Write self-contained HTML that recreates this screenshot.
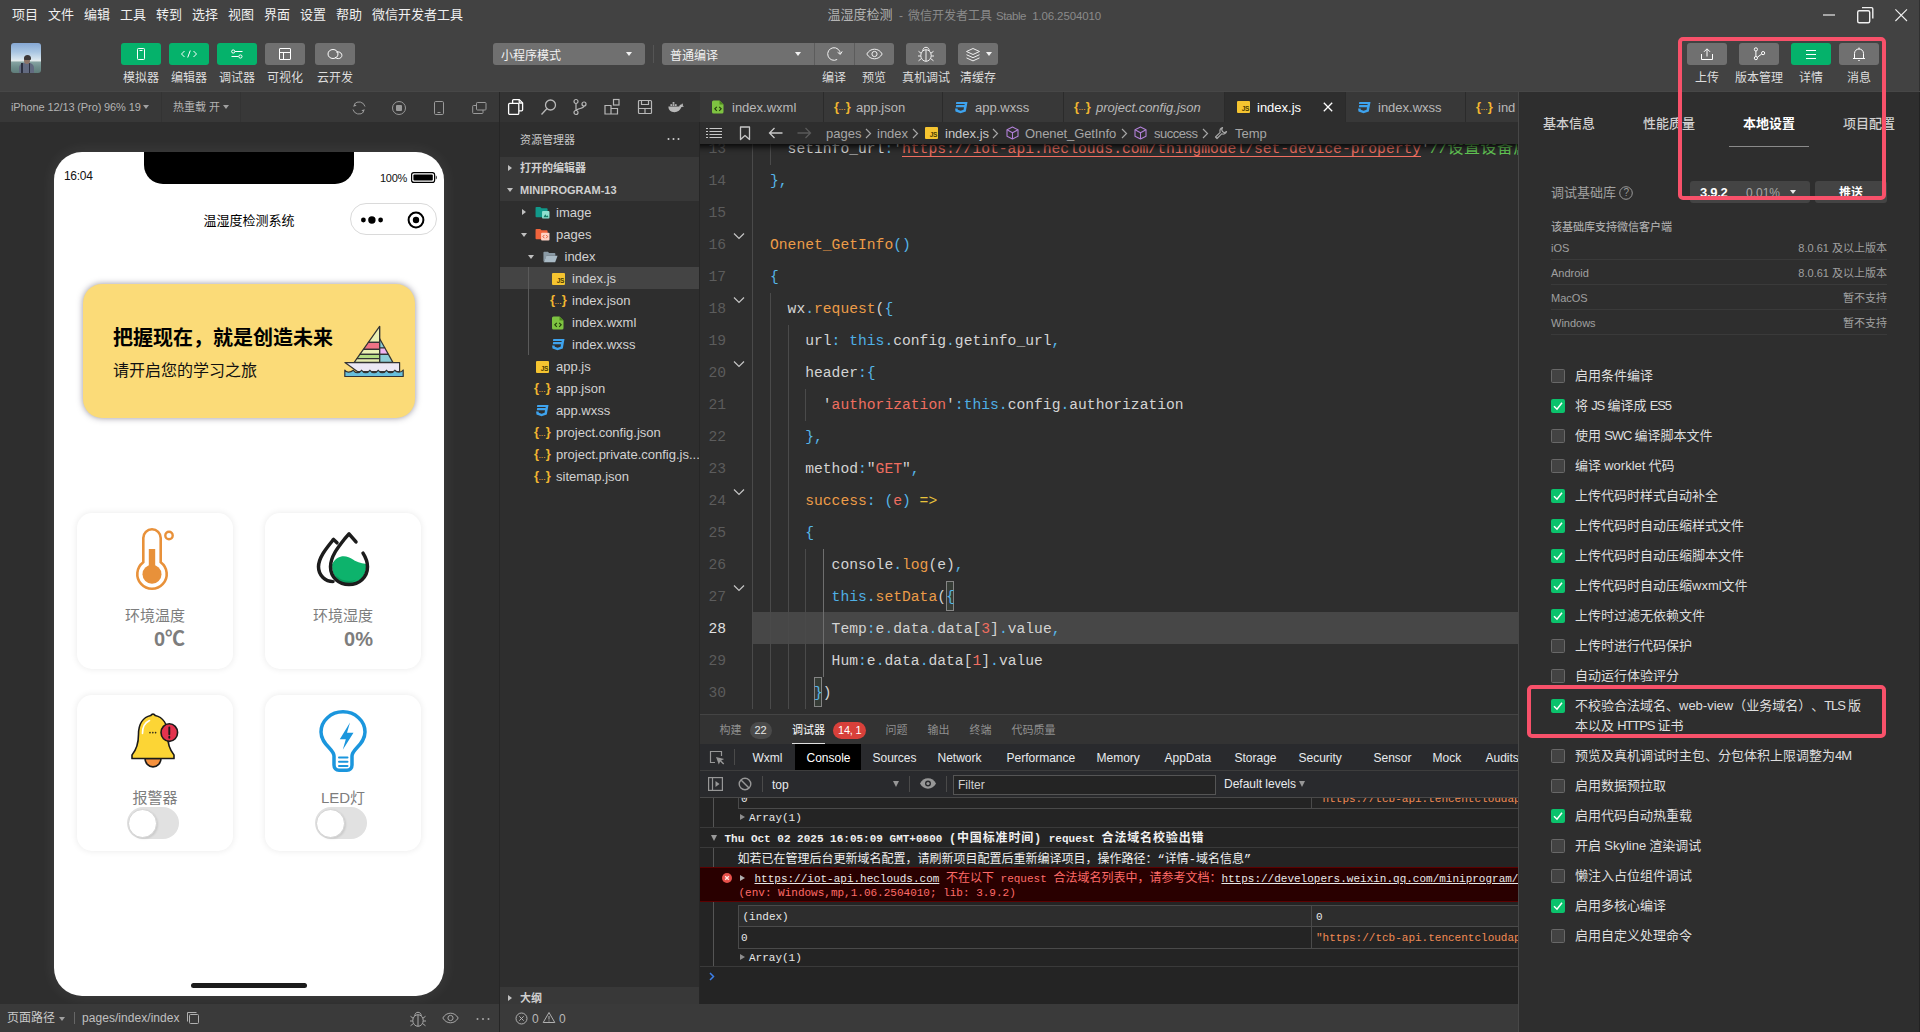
<!DOCTYPE html><html lang="zh"><head><meta charset="utf-8"><title>温湿度检测 - 微信开发者工具</title><style>
*{box-sizing:border-box;margin:0;padding:0}
html,body{width:1920px;height:1032px;overflow:hidden;background:#2e2e2e}
body{position:relative;text-spacing-trim:space-all;font-family:"Liberation Sans","Noto Sans CJK SC",sans-serif;font-size:12px;color:#ccc;-webkit-font-smoothing:antialiased}
.a{position:absolute}
.t{position:absolute;white-space:pre;line-height:20px;height:20px}
svg{position:absolute;overflow:visible}
.btn{position:absolute;top:43px;width:40px;height:22px;border-radius:3px;background:#707070}
.btn.g{background:#05b26b}
.lbl{position:absolute;top:68px;height:20px;line-height:20px;font-size:12px;color:#dedede;text-align:center;white-space:pre;transform:translateX(-50%)}
.mono{font-family:"Liberation Mono","Noto Sans CJK SC",monospace}
</style></head><body><div class="a" style="left:0px;top:0px;width:1920px;height:92px;background:#424242;"></div><div class="t" style="left:12px;top:5px;font-size:13px;color:#f0f0f0;">项目</div><div class="t" style="left:48px;top:5px;font-size:13px;color:#f0f0f0;">文件</div><div class="t" style="left:84px;top:5px;font-size:13px;color:#f0f0f0;">编辑</div><div class="t" style="left:120px;top:5px;font-size:13px;color:#f0f0f0;">工具</div><div class="t" style="left:156px;top:5px;font-size:13px;color:#f0f0f0;">转到</div><div class="t" style="left:192px;top:5px;font-size:13px;color:#f0f0f0;">选择</div><div class="t" style="left:228px;top:5px;font-size:13px;color:#f0f0f0;">视图</div><div class="t" style="left:264px;top:5px;font-size:13px;color:#f0f0f0;">界面</div><div class="t" style="left:300px;top:5px;font-size:13px;color:#f0f0f0;">设置</div><div class="t" style="left:336px;top:5px;font-size:13px;color:#f0f0f0;">帮助</div><div class="t" style="left:372px;top:5px;font-size:13px;color:#f0f0f0;">微信开发者工具</div><div class="t" style="left:827.5px;top:5px;font-size:13px;color:#b4b4b4;">温湿度检测</div><div class="t" style="left:899px;top:5.5px;font-size:12px;color:#8a8a8a;">-</div><div class="t" style="left:908px;top:5.5px;font-size:12px;color:#8a8a8a;">微信开发者工具</div><div class="t" style="left:996px;top:5.5px;font-size:11.5px;color:#8a8a8a;letter-spacing:-0.43px">Stable</div><div class="t" style="left:1032.2px;top:5.5px;font-size:11.5px;color:#8a8a8a;letter-spacing:-0.13px">1.06.2504010</div><svg style="left:1820px;top:5px" width="92" height="20" viewBox="0 0 92 20" fill="none" stroke="#f0f0f0" stroke-width="1.400"><path d="M3 10H15" stroke="#a6a6a6" stroke-width="2"/><rect x="37.700" y="5.700" width="12" height="12" rx="1.500"/><path d="M42 2.600H51.500a1.300 1.300 0 0 1 1.300 1.300V13.500"/><path d="M75.400 4.300L87 16M87 4.300L75.400 16" stroke-width="1.100"/></svg><div class="a" style="left:1919px;top:0px;width:1px;height:92px;background:#303030;"></div><div class="a" style="left:0px;top:91px;width:1920px;height:1px;background:#474747;"></div><div class="a" style="left:11px;top:43px;width:30px;height:30px;border-radius:3px;overflow:hidden;background:linear-gradient(180deg,#86a8d4 0%,#a9c6e2 30%,#d9e6ee 55%,#e6ecea 60%,#86a3a2 63%,#6f8e8c 80%,#5f7d7a 100%)"><div class="a" style="left:8px;top:19.500px;width:14.500px;height:13px;border-radius:5px 5px 0 0;background:#626a80"></div><div class="a" style="left:10px;top:20px;width:1.500px;height:10px;background:#2c3040"></div><div class="a" style="left:17.500px;top:20px;width:1.500px;height:10px;background:#2c3040"></div><div class="a" style="left:13px;top:13px;width:6px;height:8px;border-radius:3px;background:#8c7468"></div><div class="a" style="left:12.500px;top:12px;width:7px;height:5px;border-radius:3.500px 3.500px 1px 1px;background:#3c3838"></div></div><div class="btn g" style="left:121px"><svg style="left:15px;top:5px" width="10" height="12" viewBox="0 0 10 12" fill="none" stroke="#fff" stroke-width="1"><rect x="1.5" y="0.5" width="7" height="11" rx="0.8"/><path d="M3.5 2.5H6.5"/></svg></div><div class="lbl" style="left:141px">模拟器</div><div class="btn g" style="left:169px"><svg style="left:11px;top:5px" width="18" height="12" viewBox="0 0 18 12" fill="none" stroke="#fff" stroke-width="1"><path d="M4.5 3L1.5 6L4.5 9M13.5 3L16.5 6L13.5 9M10.3 2.5L7.7 9.5"/></svg></div><div class="lbl" style="left:189px">编辑器</div><div class="btn g" style="left:217px"><svg style="left:13px;top:5px" width="14" height="12" viewBox="0 0 14 12" fill="none" stroke="#fff" stroke-width="1"><path d="M5 3.5H12.5M1.5 8.5H8.5"/><circle cx="3.2" cy="3.5" r="1.6"/><circle cx="10.4" cy="8.5" r="1.6"/></svg></div><div class="lbl" style="left:237px">调试器</div><div class="btn" style="left:265px"><svg style="left:13px;top:4px" width="14" height="14" viewBox="0 0 14 14" fill="none" stroke="#fff" stroke-width="1"><rect x="1.5" y="1.5" width="11" height="11" rx="0.5"/><path d="M1.5 5.5H12.5M5.5 5.5V12.5"/></svg></div><div class="lbl" style="left:285px">可视化</div><div class="btn" style="left:315px"><svg style="left:12px;top:5px" width="16" height="12" viewBox="0 0 16 12" fill="none" stroke="#fff" stroke-width="1"><path d="M6 10.5C3.2 10.5 1 8.6 1 6S3.2 1.5 6 1.5 11 3.4 11 6 8.8 10.5 6 10.5z"/><path d="M9.3 4.2C10 3.9 10.7 3.8 11.4 3.9 13.4 4.1 14.9 5.6 14.9 7.4c0 1.8-1.6 3.2-3.6 3.2-1.2 0-2.5-.5-3.3-1.3"/></svg></div><div class="lbl" style="left:335px">云开发</div><div class="a" style="left:493px;top:43px;width:152px;height:22px;background:#707070;border-radius:3px"></div><div class="t" style="left:501px;top:46px;font-size:12px;color:#f2f2f2;">小程序模式</div><div class="a" style="left:626px;top:52px;border:3px solid transparent;border-top:4px solid #f2f2f2;border-bottom:0"></div><div class="a" style="left:653px;top:45px;width:1px;height:18px;background:#555;"></div><div class="a" style="left:662px;top:43px;width:232px;height:22px;background:#707070;border-radius:3px"></div><div class="t" style="left:670px;top:46px;font-size:12px;color:#f2f2f2;">普通编译</div><div class="a" style="left:795px;top:52px;border:3px solid transparent;border-top:4px solid #f2f2f2;border-bottom:0"></div><div class="a" style="left:814px;top:43px;width:1px;height:22px;background:#5c5c5c;"></div><div class="a" style="left:854px;top:43px;width:1px;height:22px;background:#5c5c5c;"></div><svg style="left:825.500px;top:46.200px" width="17" height="16" viewBox="0 0 17 16" fill="none" stroke="#f0f0f0" stroke-width="1"><path d="M14.300 8A6.300 6.300 0 1 0 11.150 13.460"/><path d="M11.600 6.300L14.300 8.400L16.200 5.400" stroke-linejoin="round"/></svg><svg style="left:866px;top:48px" width="17" height="12" viewBox="0 0 17 12" fill="none" stroke="#f0f0f0" stroke-width="1"><path d="M0.8 6C2.6 2.9 5.3 1.2 8.5 1.2S14.4 2.9 16.2 6C14.4 9.100 11.7 10.8 8.5 10.8S2.600 9.100 0.8 6z"/><circle cx="8.5" cy="6" r="2.6"/></svg><div class="lbl" style="left:834px">编译</div><div class="lbl" style="left:874px">预览</div><div class="a" style="left:906px;top:43px;width:40px;height:22px;background:#707070;border-radius:3px"></div><svg style="left:917px;top:45px" width="18" height="18" viewBox="0 0 18 18" fill="none" stroke="#f0f0f0" stroke-width="1"><ellipse cx="9" cy="10.500" rx="5.200" ry="5.800"/><path d="M9 4.800V16.200M5.800 6C5.800 3.500 7.200 2.300 9 2.300S12.200 3.500 12.200 6M4.200 8.300L1.500 6.300M3.800 11H1M4.200 13.700L1.500 15.800M13.800 8.300L16.500 6.300M14.200 11H17M13.800 13.700L16.500 15.800"/></svg><div class="lbl" style="left:926px">真机调试</div><div class="a" style="left:958px;top:43px;width:40px;height:22px;background:#707070;border-radius:3px"></div><svg style="left:965px;top:47px" width="17" height="16" viewBox="0 0 17 16" fill="none" stroke="#f0f0f0" stroke-width="1" stroke-linejoin="round"><path d="M8 1.500L14.500 4.500L8 7.500L1.500 4.500z"/><path d="M1.500 7.700L8 10.700L14.500 7.700M1.500 10.900L8 13.900L14.500 10.900"/></svg><div class="a" style="left:986px;top:52px;border:3px solid transparent;border-top:4px solid #f2f2f2;border-bottom:0"></div><div class="lbl" style="left:978px">清缓存</div><div class="btn" style="left:1687px"><svg style="left:13px;top:4px" width="14" height="14" viewBox="0 0 14 14" fill="none" stroke="#fff" stroke-width="1" stroke-linejoin="round"><path d="M1.500 7V12.500H12.500V7"/><path d="M7 9.500V2M4 4.800L7 1.800L10 4.800"/></svg></div><div class="lbl" style="left:1707px">上传</div><div class="btn" style="left:1739px"><svg style="left:13px;top:4px" width="14" height="14" viewBox="0 0 14 14" fill="none" stroke="#fff" stroke-width="1"><circle cx="3.900" cy="2.400" r="1.600"/><circle cx="3.900" cy="11.100" r="1.600"/><circle cx="11.100" cy="6.100" r="1.600"/><path d="M3.900 4V9.500M5.300 10.300L9.700 7"/></svg></div><div class="lbl" style="left:1759px">版本管理</div><div class="btn g" style="left:1791px"><svg style="left:15px;top:5px" width="10" height="12" viewBox="0 0 10 12" fill="none" stroke="#fff" stroke-width="1"><path d="M0 2.500H10M0 6.500H10M0 10.500H10"/></svg></div><div class="lbl" style="left:1811px">详情</div><div class="btn" style="left:1839px"><svg style="left:13px;top:3px" width="14" height="16" viewBox="0 0 14 16" fill="none" stroke="#fff" stroke-width="1"><path d="M2.500 12.500V7.500C2.500 4.800 4.500 3 7 3S11.500 4.800 11.500 7.500V12.500M1 12.500H13M7 3V1.500M6.300 14.500H7.700"/></svg></div><div class="lbl" style="left:1859px">消息</div><div class="a" style="left:0px;top:92px;width:500px;height:30px;background:#383838;"></div><div class="a" style="left:0px;top:122px;width:500px;height:882px;background:#2e2e2e;"></div><div class="t" style="left:11px;top:97px;font-size:11px;color:#b4b4b4;letter-spacing:-0.12px">iPhone 12/13 (Pro) 96% 19</div><div class="a" style="left:143px;top:105px;border:3.5px solid transparent;border-top:4px solid #a0a0a0;border-bottom:0"></div><div class="a" style="left:161px;top:92px;width:1px;height:30px;background:#333;"></div><div class="t" style="left:173px;top:97px;font-size:11px;color:#b4b4b4;">热重载 开</div><div class="a" style="left:223px;top:105px;border:3.5px solid transparent;border-top:4px solid #a0a0a0;border-bottom:0"></div><div class="a" style="left:240px;top:92px;width:1px;height:30px;background:#333;"></div><svg style="left:351px;top:100px" width="16" height="16" viewBox="0 0 16 16" fill="none" stroke="#9a9a9a" stroke-width="1"><path d="M3.200 4.200A6.200 6.200 0 0 1 14 6.500M12.800 11.800A6.200 6.200 0 0 1 2 9.500"/><path d="M2.200 6.800L3.300 3.700L5.600 5.700z M13.800 9.200L12.700 12.300L10.400 10.300z" fill="#9a9a9a" stroke="none"/></svg><svg style="left:391px;top:100px" width="16" height="16" viewBox="0 0 16 16" fill="none" stroke="#9a9a9a" stroke-width="1"><circle cx="8" cy="8" r="6.500"/><rect x="5" y="5" width="6" height="6" rx="1" fill="#9a9a9a" stroke="none"/></svg><svg style="left:433px;top:100px" width="12" height="16" viewBox="0 0 12 16" fill="none" stroke="#9a9a9a" stroke-width="1"><rect x="1.500" y="1.500" width="9" height="13" rx="1.200"/><path d="M4.500 12.500H7.500"/></svg><svg style="left:471px;top:100px" width="16" height="14" viewBox="0 0 16 14" fill="none" stroke="#9a9a9a" stroke-width="1"><rect x="5.500" y="2.500" width="9.500" height="7.500" rx="0.800"/><path d="M5.500 5.500H2.500a.8.8 0 0 0-.8.800V12.700a.8.8 0 0 0 .8.800H11.200a.8.8 0 0 0 .8-.800V10"/></svg><div class="a" style="left:54px;top:152px;width:390px;height:844px;background:#fff;border-radius:28px;box-shadow:0 0 16px rgba(255,255,255,0.085);overflow:hidden;color:#000"><div class="a" style="left:90px;top:0;width:210px;height:32px;background:#000;border-radius:0 0 19px 19px"></div><div class="t" style="left:10px;top:14px;font-size:12px;color:#111;letter-spacing:-0.3px">16:04</div><div class="t" style="left:326px;top:16px;font-size:11px;color:#111;letter-spacing:-0.3px">100%</div><svg style="left:357px;top:20px" width="27" height="11" viewBox="0 0 27 11"><rect x="0.600" y="0.600" width="23" height="9.800" rx="2.200" fill="none" stroke="#000" stroke-width="1.200"/><rect x="2.400" y="2.400" width="19.400" height="6.200" rx="1" fill="#000"/><path d="M24.800 3.500c1.200.3 1.200 3.700 0 4z" fill="#000"/></svg><div class="t" style="left:0;width:390px;text-align:center;top:59px;font-size:13px;color:#000">温湿度检测系统</div><div class="a" style="left:296px;top:51px;width:87px;height:32px;border:1px solid #dadada;border-radius:16px;background:#fff"></div><svg style="left:306px;top:61.500px" width="24" height="12" viewBox="0 0 24 12" fill="#000"><circle cx="3.400" cy="6" r="2.400"/><circle cx="11.900" cy="6" r="3.700"/><circle cx="20.600" cy="6" r="2.400"/></svg><svg style="left:352.600px;top:58.500px" width="18" height="18" viewBox="0 0 18 18"><circle cx="9" cy="9" r="7.400" fill="none" stroke="#000" stroke-width="2"/><circle cx="9" cy="9" r="3.200" fill="#000"/></svg><div class="a" style="left:29px;top:132px;width:332px;height:134px;border-radius:19px;background:#fbdb78;box-shadow:0 0 6.500px rgba(45,40,65,0.50)"></div><div class="t" style="left:59px;top:171px;height:30px;line-height:30px;font-size:20px;font-weight:bold;color:#000">把握现在，就是创造未来</div><div class="t" style="left:59px;top:207px;height:24px;line-height:24px;font-size:16px;color:#111">请开启您的学习之旅</div><svg style="left:290px;top:173px" width="60" height="52" viewBox="0 0 60 52" stroke="#333" stroke-width="1.200" stroke-linejoin="round">
<path d="M35.6 1.300L24.34 17.300H35.6z" fill="#eaf0b4"/>
<path d="M24.34 17.300L19.42 24.300H35.6V17.300z" fill="#ee7385"/>
<path d="M19.42 24.300L15.83 29.400H35.6V24.300z" fill="#eaf0b4"/>
<path d="M15.83 29.400L12.87 33.600H35.6V29.400z" fill="#b4dc82"/>
<path d="M12.87 33.600L10.2 37.400H35.6V33.600z" fill="#e6ecb0"/>
<path d="M35.6 13.500L40.89 23H35.6z" fill="#8ccdd6"/>
<path d="M35.6 23H40.89L44.45 29.400H35.6z" fill="#efb4f0"/>
<path d="M35.6 29.400H44.45L48.9 37.400H35.6z" fill="#8ccdd6"/>
<path d="M35.6 1.300V37.400" fill="none"/>
<path d="M0.900 37.600H55.600V46.500H13.400z" fill="#ece8f4"/>
<path d="M0.800 45c1.300 2.400 5.200 3 8.500 0.200 1.800 3.200 6.500 3.200 8.300 0 1.800 3.200 6.500 3.200 8.300 0 1.800 3.200 6.500 3.200 8.300 0 1.800 3.200 6.500 3.200 8.300 0 1.800 3.200 6.500 3.200 8.300 0 2 2.800 6.500 2.600 8.400-0.200V51.500H0.800z" fill="#68bedb"/>
</svg><div class="a" style="left:23px;top:361px;width:156px;height:156px;border-radius:15px;background:#fff;box-shadow:0 0 7px rgba(0,0,0,0.09)"></div><div class="a" style="left:211px;top:361px;width:156px;height:156px;border-radius:15px;background:#fff;box-shadow:0 0 7px rgba(0,0,0,0.09)"></div><div class="a" style="left:23px;top:543px;width:156px;height:156px;border-radius:15px;background:#fff;box-shadow:0 0 7px rgba(0,0,0,0.09)"></div><div class="a" style="left:211px;top:543px;width:156px;height:156px;border-radius:15px;background:#fff;box-shadow:0 0 7px rgba(0,0,0,0.09)"></div><svg style="left:81px;top:375px" width="42" height="64" viewBox="0 0 42 64" fill="none" stroke="#e8913a" stroke-width="2.600">
<path d="M8.300 35.200V11a8.700 8.700 0 0 1 17.400 0V35.200a14.700 14.700 0 1 1-17.400 0z"/>
<circle cx="17" cy="47.300" r="9.500" fill="#e8913a" stroke="none"/>
<rect x="13.800" y="22" width="6.400" height="20" fill="#e8913a" stroke="none"/>
<circle cx="34" cy="8.500" r="3.700" stroke-width="2.400"/>
</svg><svg style="left:262px;top:380px" width="54" height="55" preserveAspectRatio="none" viewBox="0 0 54 56" fill="none" stroke="#1c1c1c" stroke-width="3.500" stroke-linecap="round" stroke-linejoin="round">
<path d="M16 33C22 22 31 24 37 28C42 31.500 47 32 50.500 32.500C50.500 35 50.500 36 50 38C48.500 46.500 42 52.500 33 52.500C23 52.500 15.500 45 16 33z" fill="#0db36c" stroke="none"/>
<path d="M20 44C24 49 32 51.500 40 48.500C36 52 30 53 25 51C22 49.500 20.500 47 20 44z" fill="#0a9a5c" stroke="none"/>
<path d="M21 11L17.500 7.500C10 17 2.500 26 2.500 35.500 2.500 44.500 9.500 50.500 17 50.500"/>
<path d="M40 10L33 1.800 29 6.500C22 15.500 14.500 25 14.500 35.500 14.500 46.500 23 53.500 33 53.500S51.500 46.500 51.500 35.500C51.500 30.500 49.500 25.500 47 21.500"/>
</svg><div class="t" style="left:23px;width:156px;text-align:center;top:452px;height:24px;line-height:24px;font-size:15px;color:#7d7d7d">环境温度</div><div class="t" style="left:23px;width:108px;text-align:right;top:472px;height:30px;line-height:30px;font-size:20px;font-weight:bold;color:#7d7d7d">0℃</div><div class="t" style="left:211px;width:156px;text-align:center;top:452px;height:24px;line-height:24px;font-size:15px;color:#7d7d7d">环境湿度</div><div class="t" style="left:211px;width:108px;text-align:right;top:472px;height:30px;line-height:30px;font-size:20px;font-weight:bold;color:#7d7d7d">0%</div><svg style="left:76px;top:558.300px" width="50" height="61.400" preserveAspectRatio="none" viewBox="0 0 50 58" stroke="#1a1a1a" stroke-width="1.600" stroke-linejoin="round">
<path d="M15 45.800a8 8 0 0 0 16 0z" fill="#f5913e"/>
<path d="M20.800 5.200a2.600 2.600 0 0 1 4.400 0C33 6.800 37.500 13.500 37.500 23c0 8 1.500 14 6.500 19.500v3.300H2v-3.300C7 37 8.500 31 8.500 23 8.500 13.500 13 6.800 20.800 5.200z" fill="#fcd535"/>
<path d="M12.500 22c0-6 2.500-10 7-12" fill="none" stroke="#fff" stroke-width="1.600" stroke-linecap="round"/>
<circle cx="20" cy="21.300" r="0.300" fill="#1a1a1a" stroke-width="1"/><circle cx="22.800" cy="21.300" r="0.300" fill="#1a1a1a" stroke-width="1"/><circle cx="25.600" cy="21.300" r="0.300" fill="#1a1a1a" stroke-width="1"/>
<circle cx="39.300" cy="21.300" r="8.300" fill="#e3334e"/>
<path d="M39.300 16.500v6.300M39.300 25.300v0.800" stroke-width="1.900" stroke-linecap="round"/>
</svg><svg style="left:265px;top:558px" width="48" height="62" viewBox="0 0 48 62" fill="none" stroke="#1b96dd" stroke-width="3.500" stroke-linejoin="round" stroke-linecap="round">
<path d="M15 46c0-7-13-11.500-13-24a22 20.200 0 0 1 44 0c0 12.500-13 17-13 24v9c0 3-2 5.200-5 5.200h-8c-3 0-5-2.200-5-5.200z"/>
<path d="M20 47.500h8.500M20 51.700h8.500M20 55.900h8.500" stroke-width="2"/>
<path d="M31 12.500L20.800 29.300h6l-3 10.500 10.700-17h-6.500z" fill="#1b96dd" stroke="none"/>
</svg><div class="t" style="left:23px;width:156px;text-align:center;top:634px;height:24px;line-height:24px;font-size:15px;color:#7d7d7d">报警器</div><div class="t" style="left:211px;width:156px;text-align:center;top:634px;height:24px;line-height:24px;font-size:15px;color:#7d7d7d">LED灯</div><div class="a" style="left:73px;top:655px;width:52px;height:32px;border-radius:16px;background:#e1e1e1"><div class="a" style="left:1.200px;top:1.500px;width:29px;height:29px;border-radius:50%;background:#fff;border:1.200px solid #d3d3d3;box-shadow:1px 1px 2px rgba(0,0,0,0.10)"></div></div><div class="a" style="left:261px;top:655px;width:52px;height:32px;border-radius:16px;background:#e1e1e1"><div class="a" style="left:1.200px;top:1.500px;width:29px;height:29px;border-radius:50%;background:#fff;border:1.200px solid #d3d3d3;box-shadow:1px 1px 2px rgba(0,0,0,0.10)"></div></div><div class="a" style="left:137px;top:830.500px;width:116px;height:5px;border-radius:3px;background:#1c1c1c"></div></div><div class="a" style="left:0px;top:1004px;width:1920px;height:28px;background:#3a3a3a;"></div><div class="t" style="left:7px;top:1008px;font-size:12px;color:#c8c8c8;">页面路径</div><div class="a" style="left:59px;top:1017px;border:3.500px solid transparent;border-top:4px solid #a0a0a0;border-bottom:0"></div><div class="a" style="left:74px;top:1012px;width:1px;height:12px;background:#666;"></div><div class="t" style="left:82px;top:1008px;font-size:12px;color:#c0c0c0;letter-spacing:0.05px">pages/index/index</div><svg style="left:186px;top:1011px" width="14" height="14" viewBox="0 0 14 14" fill="none" stroke="#b0b0b0" stroke-width="1"><path d="M1.500 10.500V1.500H10.500"/><rect x="3.500" y="3.500" width="9" height="9" rx="1"/></svg><svg style="left:409px;top:1010px" width="18" height="18" viewBox="0 0 18 18" fill="none" stroke="#a8a8a8" stroke-width="1"><ellipse cx="9" cy="10.500" rx="5.200" ry="5.800"/><path d="M9 4.800V16.200M5.800 6C5.800 3.500 7.200 2.300 9 2.300S12.200 3.500 12.200 6M4.200 8.300L1.500 6.300M3.800 11H1M4.200 13.700L1.500 15.800M13.800 8.300L16.500 6.300M14.200 11H17M13.800 13.700L16.500 15.800"/></svg><svg style="left:442px;top:1012px" width="17" height="12" viewBox="0 0 17 12" fill="none" stroke="#a8a8a8" stroke-width="1"><path d="M0.800 6C2.600 2.900 5.300 1.200 8.500 1.200S14.400 2.900 16.200 6C14.400 9.100 11.700 10.800 8.500 10.800S2.600 9.100 0.800 6z"/><circle cx="8.500" cy="6" r="2.600"/></svg><svg style="left:476px;top:1017px" width="14" height="4" viewBox="0 0 14 4" fill="#a8a8a8"><circle cx="1.500" cy="2" r="1"/><circle cx="7" cy="2" r="1"/><circle cx="12.500" cy="2" r="1"/></svg><div class="a" style="left:499px;top:92px;width:1px;height:940px;background:#262626;"></div><div class="a" style="left:500px;top:92px;width:200px;height:30px;background:#333333;"></div><div class="a" style="left:500px;top:122px;width:199px;height:882px;background:#2e2e2e;"></div><svg style="left:507px;top:98px" width="18" height="18" viewBox="0 0 18 18" fill="none" stroke="#fff" stroke-width="1.300" stroke-linejoin="round"><path d="M5.600 5.200V2.600a1 1 0 0 1 1-1H12.300L15.600 4.900V11.800a1 1 0 0 1-1 1H12"/><path d="M12.200 1.800V5H15.400"/><rect x="1.600" y="5.400" width="10.200" height="11" rx="1.200"/></svg><svg style="left:540px;top:98px" width="18" height="18" viewBox="0 0 18 18" fill="none" stroke="#b8b8b8" stroke-width="1.300"><circle cx="10.500" cy="7" r="5"/><path d="M7 10.500L1.500 16.500"/></svg><svg style="left:571px;top:98px" width="18" height="18" viewBox="0 0 18 18" fill="none" stroke="#b8b8b8" stroke-width="1.200"><circle cx="5" cy="3.500" r="2"/><circle cx="5" cy="14.500" r="2"/><circle cx="13" cy="6" r="2"/><path d="M5 5.500V12.500M13 8c0 3-7.500 2-8 5"/></svg><svg style="left:603px;top:98px" width="18" height="18" viewBox="0 0 18 18" fill="none" stroke="#b8b8b8" stroke-width="1.200"><path d="M2 7.500H8V16H2zM8 10.500H14.500V16H8M8 10.500V7.500"/><rect x="10.500" y="1.500" width="5.500" height="5.500"/></svg><svg style="left:637px;top:99px" width="16" height="16" viewBox="0 0 16 16" fill="none" stroke="#b8b8b8" stroke-width="1.200"><rect x="1.500" y="1.500" width="13" height="13" rx="1"/><path d="M4.500 1.500V5.500H11.500V1.500M1.500 9.500H8V14.500M8 9.500H14.500"/></svg><svg style="left:668px;top:101px" width="16" height="12" viewBox="0 0 20 14" fill="#b8b8b8"><path d="M0.500 6.500H14c.5-2 1.500-3 3-2.500C17 3 17.500 2.500 18 2.500c.8 1 .8 2 .5 2.800.8.200 1.200.500 1.500.900-1 .800-2 1-3.200.900C15.500 11 12.500 13.500 8 13.500 3.500 13.500.500 11 .500 6.500z"/><rect x="3" y="3.500" width="2.200" height="2.200"/><rect x="5.800" y="3.500" width="2.200" height="2.200"/><rect x="8.600" y="3.500" width="2.200" height="2.200"/><rect x="5.800" y="0.800" width="2.200" height="2.200"/></svg><div class="t" style="left:520px;top:129.5px;font-size:11px;color:#c8c8c8;">资源管理器</div><svg style="left:667px;top:137px" width="14" height="4" viewBox="0 0 14 4" fill="#d0d0d0"><circle cx="1.500" cy="2" r="1"/><circle cx="6.500" cy="2" r="1"/><circle cx="11.500" cy="2" r="1"/></svg><div class="a" style="left:500px;top:157px;width:199px;height:44px;background:#383838;"></div><div class="a" style="left:508px;top:164.5px;border:3.500px solid transparent;border-left:4.500px solid #c0c0c0;border-right:0"></div><div class="t" style="left:520px;top:158px;font-size:11px;color:#d0d0d0;font-weight:bold">打开的编辑器</div><div class="a" style="left:506.5px;top:188px;border:3.500px solid transparent;border-top:4.500px solid #c0c0c0;border-bottom:0"></div><div class="t" style="left:520px;top:180px;font-size:11px;color:#d0d0d0;font-weight:bold">MINIPROGRAM-13</div><div class="a" style="left:500px;top:267px;width:199px;height:22px;background:#444444;"></div><div class="a" style="left:528px;top:267px;width:1px;height:88px;background:#5a5a5a;"></div><div class="a" style="left:522px;top:209.0px;border:3.500px solid transparent;border-left:4.500px solid #c0c0c0;border-right:0"></div><svg style="left:535px;top:206.0px" width="15" height="13" viewBox="0 0 16 14"><path d="M0.500 2A1 1 0 0 1 1.500 1H5.500L7 2.500H12.500A1 1 0 0 1 13.500 3.500V11A1 1 0 0 1 12.500 12H1.500A1 1 0 0 1 .500 11z" fill="#11998a"/><rect x="7.500" y="5.500" width="8" height="8" rx="1" fill="#8fe0cf"/><path d="M9 12l2-3 1.500 2 1-1 1 2z" fill="#127a63"/></svg><div class="t" style="left:556px;top:202.5px;font-size:13px;color:#d2d2d2;">image</div><div class="a" style="left:520.5px;top:232.5px;border:3.500px solid transparent;border-top:4.500px solid #c0c0c0;border-bottom:0"></div><svg style="left:535px;top:228.0px" width="15" height="13" viewBox="0 0 16 14"><path d="M0.500 2A1 1 0 0 1 1.500 1H5.500L7 2.500H12.500A1 1 0 0 1 13.500 3.500V11A1 1 0 0 1 12.500 12H1.500A1 1 0 0 1 .500 11z" fill="#f0643c"/><rect x="6.500" y="5" width="9" height="8.500" rx="1" fill="#ffd2c4"/><path d="M10 7.500L8.500 9.200 10 11M12 7.500l1.500 1.700L12 11" fill="none" stroke="#e0522c" stroke-width="1"/></svg><div class="t" style="left:556px;top:224.5px;font-size:13px;color:#d2d2d2;">pages</div><div class="a" style="left:527.5px;top:254.5px;border:3.500px solid transparent;border-top:4.500px solid #c0c0c0;border-bottom:0"></div><svg style="left:543px;top:250.5px" width="15" height="12" viewBox="0 0 17 13"><path d="M0.500 1.500A1 1 0 0 1 1.500 .500H5.500L7 2H13A1 1 0 0 1 14 3V5H4L1.500 11.500H.500z" fill="#8a9aa5"/><path d="M3.800 5H16.500L13.800 12.500H1z" fill="#a9bac5"/></svg><div class="t" style="left:564.5px;top:246.5px;font-size:13px;color:#d2d2d2;">index</div><div class="a" style="left:552px;top:272.5px;width:12.500px;height:12px;background:#f5c430;border-radius:1px"></div><div class="t" style="left:556.8px;top:274.5px;font-size:6.500px;font-weight:bold;color:#4a3c00;height:12px;line-height:12px;letter-spacing:-0.3px">JS</div><div class="t" style="left:572px;top:268.5px;font-size:13px;color:#d2d2d2;">index.js</div><div class="t" style="left:550px;top:290.0px;font-size:13px;font-weight:bold;color:#f2b731;letter-spacing:-0.6px">{<span style="font-size:9px;font-weight:normal;letter-spacing:-0.1px;position:relative;top:-0.500px">...</span>}</div><div class="t" style="left:572px;top:290.5px;font-size:13px;color:#d2d2d2;">index.json</div><svg style="left:552px;top:315.5px" width="12" height="14" viewBox="0 0 12 14"><path d="M1.500 0.500H7.500L11.500 4.500V12a1.500 1.500 0 0 1-1.500 1.500H1.500A1.500 1.500 0 0 1 0 12V2A1.500 1.500 0 0 1 1.500 0.500z" fill="#7ec341"/><path d="M7.500 0.500V4.500H11.500z" fill="#4e8a1e"/><path d="M4.800 6.800L2.800 8.800 4.800 10.800M7.200 6.800l2 2-2 2" fill="none" stroke="#203a08" stroke-width="1.100"/></svg><div class="t" style="left:572px;top:312.5px;font-size:13px;color:#d2d2d2;">index.wxml</div><svg style="left:550.5px;top:338.0px" width="14" height="13" preserveAspectRatio="none" viewBox="0 0 14 14" fill="#3ea3ee"><path d="M2.300 1H13.500L11.800 11.200 6.500 13.200 1.500 11.200 1.100 8.200H3.600L3.800 9.500 6.600 10.600 9.600 9.500 10 6.800H1.800L2.200 4.400H10.500L10.700 3.300H1.900z"/></svg><div class="t" style="left:572px;top:334.5px;font-size:13px;color:#d2d2d2;">index.wxss</div><div class="a" style="left:536px;top:360.5px;width:12.500px;height:12px;background:#f5c430;border-radius:1px"></div><div class="t" style="left:540.8px;top:362.5px;font-size:6.500px;font-weight:bold;color:#4a3c00;height:12px;line-height:12px;letter-spacing:-0.3px">JS</div><div class="t" style="left:556px;top:356.5px;font-size:13px;color:#d2d2d2;">app.js</div><div class="t" style="left:534px;top:378.0px;font-size:13px;font-weight:bold;color:#f2b731;letter-spacing:-0.6px">{<span style="font-size:9px;font-weight:normal;letter-spacing:-0.1px;position:relative;top:-0.500px">...</span>}</div><div class="t" style="left:556px;top:378.5px;font-size:13px;color:#d2d2d2;">app.json</div><svg style="left:534.5px;top:404.0px" width="14" height="13" preserveAspectRatio="none" viewBox="0 0 14 14" fill="#3ea3ee"><path d="M2.300 1H13.500L11.800 11.200 6.500 13.200 1.500 11.200 1.100 8.200H3.600L3.800 9.500 6.600 10.600 9.600 9.500 10 6.800H1.800L2.200 4.400H10.500L10.700 3.300H1.900z"/></svg><div class="t" style="left:556px;top:400.5px;font-size:13px;color:#d2d2d2;">app.wxss</div><div class="t" style="left:534px;top:422.0px;font-size:13px;font-weight:bold;color:#f2b731;letter-spacing:-0.6px">{<span style="font-size:9px;font-weight:normal;letter-spacing:-0.1px;position:relative;top:-0.500px">...</span>}</div><div class="t" style="left:556px;top:422.5px;font-size:13px;color:#d2d2d2;">project.config.json</div><div class="t" style="left:534px;top:444.0px;font-size:13px;font-weight:bold;color:#f2b731;letter-spacing:-0.6px">{<span style="font-size:9px;font-weight:normal;letter-spacing:-0.1px;position:relative;top:-0.500px">...</span>}</div><div class="t" style="left:556px;top:444.5px;font-size:13px;color:#d2d2d2;">project.private.config.js...</div><div class="t" style="left:534px;top:466.0px;font-size:13px;font-weight:bold;color:#f2b731;letter-spacing:-0.6px">{<span style="font-size:9px;font-weight:normal;letter-spacing:-0.1px;position:relative;top:-0.500px">...</span>}</div><div class="t" style="left:556px;top:466.5px;font-size:13px;color:#d2d2d2;">sitemap.json</div><div class="a" style="left:500px;top:987px;width:199px;height:17px;background:#383838;"></div><div class="a" style="left:508px;top:994.5px;border:3.500px solid transparent;border-left:4.500px solid #c0c0c0;border-right:0"></div><div class="t" style="left:520px;top:988px;font-size:11px;color:#d0d0d0;font-weight:bold">大纲</div><svg style="left:515px;top:1012px" width="13" height="13" viewBox="0 0 13 13" fill="none" stroke="#b0b0b0" stroke-width="1"><circle cx="6.500" cy="6.500" r="5.500"/><path d="M4.300 4.300l4.400 4.400M8.700 4.300L4.300 8.700"/></svg><div class="t" style="left:532px;top:1008.5px;font-size:12px;color:#b8b8b8;">0</div><svg style="left:542px;top:1011px" width="14" height="13" viewBox="0 0 14 13" fill="none" stroke="#b0b0b0" stroke-width="1" stroke-linejoin="round"><path d="M7 1.500L12.800 11.500H1.200z"/><path d="M7 5V8.500M7 9.500v1"/></svg><div class="t" style="left:559px;top:1008.5px;font-size:12px;color:#b8b8b8;">0</div><div class="a" style="left:699px;top:122px;width:1px;height:882px;background:#262626;"></div><div class="a" style="left:700px;top:92px;width:819px;height:30px;background:#383838;"></div><div class="a" style="left:700px;top:122px;width:819px;height:592px;background:#2e2e2e;"></div><div class="a" style="left:823px;top:92px;width:1px;height:30px;background:#2b2b2b;"></div><svg style="left:712px;top:100px" width="12" height="14" viewBox="0 0 12 14"><path d="M1.500 0.500H7.500L11.500 4.500V12a1.500 1.500 0 0 1-1.500 1.500H1.500A1.500 1.500 0 0 1 0 12V2A1.500 1.500 0 0 1 1.500 0.500z" fill="#7ec341"/><path d="M7.500 0.500V4.500H11.500z" fill="#4e8a1e"/><path d="M4.800 6.800L2.800 8.800 4.800 10.800M7.200 6.800l2 2-2 2" fill="none" stroke="#203a08" stroke-width="1.100"/></svg><div class="t" style="left:732px;top:98px;font-size:13px;color:#b9b9b9;">index.wxml</div><div class="a" style="left:942px;top:92px;width:1px;height:30px;background:#2b2b2b;"></div><div class="t" style="left:834px;top:96.5px;font-size:13px;font-weight:bold;color:#f2b731;letter-spacing:-0.6px">{<span style="font-size:9px;font-weight:normal;letter-spacing:-0.1px;position:relative;top:-0.500px">...</span>}</div><div class="t" style="left:856px;top:98px;font-size:13px;color:#b9b9b9;">app.json</div><div class="a" style="left:1063px;top:92px;width:1px;height:30px;background:#2b2b2b;"></div><svg style="left:953.5px;top:100.5px" width="14" height="13" preserveAspectRatio="none" viewBox="0 0 14 14" fill="#3ea3ee"><path d="M2.300 1H13.500L11.800 11.200 6.500 13.200 1.500 11.200 1.100 8.200H3.600L3.800 9.500 6.600 10.600 9.600 9.500 10 6.800H1.800L2.200 4.400H10.500L10.700 3.300H1.900z"/></svg><div class="t" style="left:975px;top:98px;font-size:13px;color:#b9b9b9;">app.wxss</div><div class="a" style="left:1224px;top:92px;width:1px;height:30px;background:#2b2b2b;"></div><div class="t" style="left:1074px;top:96.5px;font-size:13px;font-weight:bold;color:#f2b731;letter-spacing:-0.6px">{<span style="font-size:9px;font-weight:normal;letter-spacing:-0.1px;position:relative;top:-0.500px">...</span>}</div><div class="t" style="left:1096px;top:98px;font-size:13px;color:#b9b9b9;font-style:italic;">project.config.json</div><div class="a" style="left:1225px;top:92px;width:121px;height:30px;background:#2e2e2e;"></div><div class="a" style="left:1345px;top:92px;width:1px;height:30px;background:#2b2b2b;"></div><div class="a" style="left:1237px;top:101px;width:12.500px;height:12px;background:#f5c430;border-radius:1px"></div><div class="t" style="left:1241.8px;top:103px;font-size:6.500px;font-weight:bold;color:#4a3c00;height:12px;line-height:12px;letter-spacing:-0.3px">JS</div><div class="t" style="left:1257px;top:98px;font-size:13px;color:#ffffff;">index.js</div><div class="a" style="left:1465px;top:92px;width:1px;height:30px;background:#2b2b2b;"></div><svg style="left:1356.5px;top:100.5px" width="14" height="13" preserveAspectRatio="none" viewBox="0 0 14 14" fill="#3ea3ee"><path d="M2.300 1H13.500L11.800 11.200 6.500 13.200 1.500 11.200 1.100 8.200H3.600L3.800 9.500 6.600 10.600 9.600 9.500 10 6.800H1.800L2.200 4.400H10.500L10.700 3.300H1.900z"/></svg><div class="t" style="left:1378px;top:98px;font-size:13px;color:#b9b9b9;">index.wxss</div><div class="a" style="left:1518px;top:92px;width:1px;height:30px;background:#2b2b2b;"></div><div class="t" style="left:1476px;top:96.5px;font-size:13px;font-weight:bold;color:#f2b731;letter-spacing:-0.6px">{<span style="font-size:9px;font-weight:normal;letter-spacing:-0.1px;position:relative;top:-0.500px">...</span>}</div><div class="t" style="left:1498px;top:98px;font-size:13px;color:#b9b9b9;">ind</div><svg style="left:1323px;top:102px" width="10" height="10" viewBox="0 0 10 10" fill="none" stroke="#fff" stroke-width="1.300"><path d="M0.800 0.800L9.200 9.200M9.200 0.800L0.800 9.200"/></svg><div class="a" style="left:700px;top:122px;width:818px;height:592px;overflow:hidden"><div class="a" style="left:52px;top:490px;width:766px;height:32px;background:#474747"></div><div class="a" style="left:245.5px;top:459px;width:8.8px;height:30px;border:1px solid #858585;background:#363c36"></div><div class="a" style="left:113.5px;top:555px;width:8.8px;height:30px;border:1px solid #858585;background:#363c36"></div><div class="t mono" style="left:0;width:26px;text-align:right;top:11px;height:32px;line-height:32px;font-size:14.66px;color:#5c5c5c">13</div><div class="a" style="left:52.4px;top:11px;width:1px;height:32px;background:#4a4a4a"></div><div class="a" style="left:70.0px;top:11px;width:1px;height:32px;background:#4a4a4a"></div><div class="t mono" style="left:87.6px;top:11px;height:32px;line-height:32px;font-size:14.66px;letter-spacing:0.003px"><span style="color:#d4d4d4;">setinfo_url</span><span style="color:#56b6e8;">:</span><span style="color:#d4d4d4;">'</span><span style="color:#f06e60;text-decoration:underline;text-underline-offset:3px">https://iot-api.heclouds.com/thingmodel/set-device-property</span><span style="color:#d4d4d4;">'</span><span style="color:#62c554;">//<span style="font-size:16px;letter-spacing:0.5px">设置设备属性</span></span></div><div class="t mono" style="left:0;width:26px;text-align:right;top:43px;height:32px;line-height:32px;font-size:14.66px;color:#5c5c5c">14</div><div class="a" style="left:52.4px;top:43px;width:1px;height:32px;background:#4a4a4a"></div><div class="t mono" style="left:70.0px;top:43px;height:32px;line-height:32px;font-size:14.66px;letter-spacing:0.003px"><span style="color:#56b6e8;">},</span></div><div class="t mono" style="left:0;width:26px;text-align:right;top:75px;height:32px;line-height:32px;font-size:14.66px;color:#5c5c5c">15</div><div class="a" style="left:52.4px;top:75px;width:1px;height:32px;background:#4a4a4a"></div><div class="t mono" style="left:0;width:26px;text-align:right;top:107px;height:32px;line-height:32px;font-size:14.66px;color:#5c5c5c">16</div><div class="a" style="left:52.4px;top:107px;width:1px;height:32px;background:#4a4a4a"></div><div class="t mono" style="left:70.0px;top:107px;height:32px;line-height:32px;font-size:14.66px;letter-spacing:0.003px"><span style="color:#ec9c48;">Onenet_GetInfo</span><span style="color:#56b6e8;">()</span></div><svg style="left:33px;top:110px" width="12" height="8" viewBox="0 0 12 8" fill="none" stroke="#c5c5c5" stroke-width="1.200"><path d="M1 1.500L6 6.500L11 1.500"/></svg><div class="t mono" style="left:0;width:26px;text-align:right;top:139px;height:32px;line-height:32px;font-size:14.66px;color:#5c5c5c">17</div><div class="a" style="left:52.4px;top:139px;width:1px;height:32px;background:#4a4a4a"></div><div class="t mono" style="left:70.0px;top:139px;height:32px;line-height:32px;font-size:14.66px;letter-spacing:0.003px"><span style="color:#56b6e8;">{</span></div><div class="t mono" style="left:0;width:26px;text-align:right;top:171px;height:32px;line-height:32px;font-size:14.66px;color:#5c5c5c">18</div><div class="a" style="left:52.4px;top:171px;width:1px;height:32px;background:#4a4a4a"></div><div class="a" style="left:70.0px;top:171px;width:1px;height:32px;background:#4a4a4a"></div><div class="t mono" style="left:87.6px;top:171px;height:32px;line-height:32px;font-size:14.66px;letter-spacing:0.003px"><span style="color:#d4d4d4;">wx</span><span style="color:#56b6e8;">.</span><span style="color:#ec9c48;">request</span><span style="color:#d4d4d4;">(</span><span style="color:#56b6e8;">{</span></div><svg style="left:33px;top:174px" width="12" height="8" viewBox="0 0 12 8" fill="none" stroke="#c5c5c5" stroke-width="1.200"><path d="M1 1.500L6 6.500L11 1.500"/></svg><div class="t mono" style="left:0;width:26px;text-align:right;top:203px;height:32px;line-height:32px;font-size:14.66px;color:#5c5c5c">19</div><div class="a" style="left:52.4px;top:203px;width:1px;height:32px;background:#4a4a4a"></div><div class="a" style="left:70.0px;top:203px;width:1px;height:32px;background:#4a4a4a"></div><div class="a" style="left:87.6px;top:203px;width:1px;height:32px;background:#4a4a4a"></div><div class="t mono" style="left:105.2px;top:203px;height:32px;line-height:32px;font-size:14.66px;letter-spacing:0.003px"><span style="color:#d4d4d4;">url</span><span style="color:#56b6e8;">: </span><span style="color:#4fb0e6;">this</span><span style="color:#56b6e8;">.</span><span style="color:#d4d4d4;">config</span><span style="color:#56b6e8;">.</span><span style="color:#d4d4d4;">getinfo_url</span><span style="color:#56b6e8;">,</span></div><div class="t mono" style="left:0;width:26px;text-align:right;top:235px;height:32px;line-height:32px;font-size:14.66px;color:#5c5c5c">20</div><div class="a" style="left:52.4px;top:235px;width:1px;height:32px;background:#4a4a4a"></div><div class="a" style="left:70.0px;top:235px;width:1px;height:32px;background:#4a4a4a"></div><div class="a" style="left:87.6px;top:235px;width:1px;height:32px;background:#4a4a4a"></div><div class="t mono" style="left:105.2px;top:235px;height:32px;line-height:32px;font-size:14.66px;letter-spacing:0.003px"><span style="color:#d4d4d4;">header</span><span style="color:#56b6e8;">:{</span></div><svg style="left:33px;top:238px" width="12" height="8" viewBox="0 0 12 8" fill="none" stroke="#c5c5c5" stroke-width="1.200"><path d="M1 1.500L6 6.500L11 1.500"/></svg><div class="t mono" style="left:0;width:26px;text-align:right;top:267px;height:32px;line-height:32px;font-size:14.66px;color:#5c5c5c">21</div><div class="a" style="left:52.4px;top:267px;width:1px;height:32px;background:#4a4a4a"></div><div class="a" style="left:70.0px;top:267px;width:1px;height:32px;background:#4a4a4a"></div><div class="a" style="left:87.6px;top:267px;width:1px;height:32px;background:#4a4a4a"></div><div class="a" style="left:105.2px;top:267px;width:1px;height:32px;background:#4a4a4a"></div><div class="t mono" style="left:122.8px;top:267px;height:32px;line-height:32px;font-size:14.66px;letter-spacing:0.003px"><span style="color:#d4d4d4;">'</span><span style="color:#f06e60;">authorization</span><span style="color:#d4d4d4;">'</span><span style="color:#56b6e8;">:</span><span style="color:#4fb0e6;">this</span><span style="color:#56b6e8;">.</span><span style="color:#d4d4d4;">config</span><span style="color:#56b6e8;">.</span><span style="color:#d4d4d4;">authorization</span></div><div class="t mono" style="left:0;width:26px;text-align:right;top:299px;height:32px;line-height:32px;font-size:14.66px;color:#5c5c5c">22</div><div class="a" style="left:52.4px;top:299px;width:1px;height:32px;background:#4a4a4a"></div><div class="a" style="left:70.0px;top:299px;width:1px;height:32px;background:#4a4a4a"></div><div class="a" style="left:87.6px;top:299px;width:1px;height:32px;background:#4a4a4a"></div><div class="t mono" style="left:105.2px;top:299px;height:32px;line-height:32px;font-size:14.66px;letter-spacing:0.003px"><span style="color:#56b6e8;">},</span></div><div class="t mono" style="left:0;width:26px;text-align:right;top:331px;height:32px;line-height:32px;font-size:14.66px;color:#5c5c5c">23</div><div class="a" style="left:52.4px;top:331px;width:1px;height:32px;background:#4a4a4a"></div><div class="a" style="left:70.0px;top:331px;width:1px;height:32px;background:#4a4a4a"></div><div class="a" style="left:87.6px;top:331px;width:1px;height:32px;background:#4a4a4a"></div><div class="t mono" style="left:105.2px;top:331px;height:32px;line-height:32px;font-size:14.66px;letter-spacing:0.003px"><span style="color:#d4d4d4;">method</span><span style="color:#56b6e8;">:</span><span style="color:#d4d4d4;">"</span><span style="color:#f06e60;">GET</span><span style="color:#d4d4d4;">"</span><span style="color:#56b6e8;">,</span></div><div class="t mono" style="left:0;width:26px;text-align:right;top:363px;height:32px;line-height:32px;font-size:14.66px;color:#5c5c5c">24</div><div class="a" style="left:52.4px;top:363px;width:1px;height:32px;background:#4a4a4a"></div><div class="a" style="left:70.0px;top:363px;width:1px;height:32px;background:#4a4a4a"></div><div class="a" style="left:87.6px;top:363px;width:1px;height:32px;background:#4a4a4a"></div><div class="t mono" style="left:105.2px;top:363px;height:32px;line-height:32px;font-size:14.66px;letter-spacing:0.003px"><span style="color:#ec9c48;">success</span><span style="color:#56b6e8;">: (</span><span style="color:#f06e60;">e</span><span style="color:#56b6e8;">) </span><span style="color:#e8c33c;">=&gt;</span></div><svg style="left:33px;top:366px" width="12" height="8" viewBox="0 0 12 8" fill="none" stroke="#c5c5c5" stroke-width="1.200"><path d="M1 1.500L6 6.500L11 1.500"/></svg><div class="t mono" style="left:0;width:26px;text-align:right;top:395px;height:32px;line-height:32px;font-size:14.66px;color:#5c5c5c">25</div><div class="a" style="left:52.4px;top:395px;width:1px;height:32px;background:#4a4a4a"></div><div class="a" style="left:70.0px;top:395px;width:1px;height:32px;background:#4a4a4a"></div><div class="a" style="left:87.6px;top:395px;width:1px;height:32px;background:#4a4a4a"></div><div class="t mono" style="left:105.2px;top:395px;height:32px;line-height:32px;font-size:14.66px;letter-spacing:0.003px"><span style="color:#56b6e8;">{</span></div><div class="t mono" style="left:0;width:26px;text-align:right;top:427px;height:32px;line-height:32px;font-size:14.66px;color:#5c5c5c">26</div><div class="a" style="left:52.4px;top:427px;width:1px;height:32px;background:#4a4a4a"></div><div class="a" style="left:70.0px;top:427px;width:1px;height:32px;background:#4a4a4a"></div><div class="a" style="left:87.6px;top:427px;width:1px;height:32px;background:#4a4a4a"></div><div class="a" style="left:105.2px;top:427px;width:1px;height:32px;background:#4a4a4a"></div><div class="a" style="left:122.8px;top:427px;width:1px;height:32px;background:#6e6e6e"></div><div class="t mono" style="left:131.6px;top:427px;height:32px;line-height:32px;font-size:14.66px;letter-spacing:0.003px"><span style="color:#d4d4d4;">console</span><span style="color:#56b6e8;">.</span><span style="color:#ec9c48;">log</span><span style="color:#d4d4d4;">(e)</span><span style="color:#56b6e8;">,</span></div><div class="t mono" style="left:0;width:26px;text-align:right;top:459px;height:32px;line-height:32px;font-size:14.66px;color:#5c5c5c">27</div><div class="a" style="left:52.4px;top:459px;width:1px;height:32px;background:#4a4a4a"></div><div class="a" style="left:70.0px;top:459px;width:1px;height:32px;background:#4a4a4a"></div><div class="a" style="left:87.6px;top:459px;width:1px;height:32px;background:#4a4a4a"></div><div class="a" style="left:105.2px;top:459px;width:1px;height:32px;background:#4a4a4a"></div><div class="a" style="left:122.8px;top:459px;width:1px;height:32px;background:#6e6e6e"></div><div class="t mono" style="left:131.6px;top:459px;height:32px;line-height:32px;font-size:14.66px;letter-spacing:0.003px"><span style="color:#4fb0e6;">this</span><span style="color:#56b6e8;">.</span><span style="color:#ec9c48;">setData</span><span style="color:#d4d4d4;">(</span><span style="color:#56b6e8;">{</span></div><svg style="left:33px;top:462px" width="12" height="8" viewBox="0 0 12 8" fill="none" stroke="#c5c5c5" stroke-width="1.200"><path d="M1 1.500L6 6.500L11 1.500"/></svg><div class="t mono" style="left:0;width:26px;text-align:right;top:491px;height:32px;line-height:32px;font-size:14.66px;color:#e0e0e0">28</div><div class="a" style="left:52.4px;top:491px;width:1px;height:32px;background:#4a4a4a"></div><div class="a" style="left:70.0px;top:491px;width:1px;height:32px;background:#4a4a4a"></div><div class="a" style="left:87.6px;top:491px;width:1px;height:32px;background:#4a4a4a"></div><div class="a" style="left:105.2px;top:491px;width:1px;height:32px;background:#4a4a4a"></div><div class="a" style="left:122.8px;top:491px;width:1px;height:32px;background:#6e6e6e"></div><div class="t mono" style="left:131.6px;top:491px;height:32px;line-height:32px;font-size:14.66px;letter-spacing:0.003px"><span style="color:#d4d4d4;">Temp</span><span style="color:#56b6e8;">:</span><span style="color:#d4d4d4;">e</span><span style="color:#56b6e8;">.</span><span style="color:#d4d4d4;">data</span><span style="color:#56b6e8;">.</span><span style="color:#d4d4d4;">data[</span><span style="color:#f06e60;">3</span><span style="color:#d4d4d4;">]</span><span style="color:#56b6e8;">.</span><span style="color:#d4d4d4;">value</span><span style="color:#56b6e8;">,</span></div><div class="t mono" style="left:0;width:26px;text-align:right;top:523px;height:32px;line-height:32px;font-size:14.66px;color:#5c5c5c">29</div><div class="a" style="left:52.4px;top:523px;width:1px;height:32px;background:#4a4a4a"></div><div class="a" style="left:70.0px;top:523px;width:1px;height:32px;background:#4a4a4a"></div><div class="a" style="left:87.6px;top:523px;width:1px;height:32px;background:#4a4a4a"></div><div class="a" style="left:105.2px;top:523px;width:1px;height:32px;background:#4a4a4a"></div><div class="a" style="left:122.8px;top:523px;width:1px;height:32px;background:#6e6e6e"></div><div class="t mono" style="left:131.6px;top:523px;height:32px;line-height:32px;font-size:14.66px;letter-spacing:0.003px"><span style="color:#d4d4d4;">Hum</span><span style="color:#56b6e8;">:</span><span style="color:#d4d4d4;">e</span><span style="color:#56b6e8;">.</span><span style="color:#d4d4d4;">data</span><span style="color:#56b6e8;">.</span><span style="color:#d4d4d4;">data[</span><span style="color:#f06e60;">1</span><span style="color:#d4d4d4;">]</span><span style="color:#56b6e8;">.</span><span style="color:#d4d4d4;">value</span></div><div class="t mono" style="left:0;width:26px;text-align:right;top:555px;height:32px;line-height:32px;font-size:14.66px;color:#5c5c5c">30</div><div class="a" style="left:52.4px;top:555px;width:1px;height:32px;background:#4a4a4a"></div><div class="a" style="left:70.0px;top:555px;width:1px;height:32px;background:#4a4a4a"></div><div class="a" style="left:87.6px;top:555px;width:1px;height:32px;background:#4a4a4a"></div><div class="a" style="left:105.2px;top:555px;width:1px;height:32px;background:#4a4a4a"></div><div class="t mono" style="left:114.0px;top:555px;height:32px;line-height:32px;font-size:14.66px;letter-spacing:0.003px"><span style="color:#56b6e8;">}</span><span style="color:#d4d4d4;">)</span></div></div><div class="a" style="left:700px;top:122px;width:819px;height:40px;overflow:hidden"><div class="a" style="left:-10px;top:0;width:839px;height:22px;background:#2e2e2e;box-shadow:0 4px 6px -1px rgba(0,0,0,0.85)"></div></div><svg style="left:706px;top:127px" width="16" height="12" viewBox="0 0 16 12" fill="none" stroke="#c8c8c8" stroke-width="1.200"><path d="M3.500 1.500H16M3.500 4.500H16M3.500 7.500H16M3.500 10.500H16M0 1.500H2M0 4.500H2M0 7.500H2M0 10.500H2"/></svg><svg style="left:739px;top:126px" width="12" height="15" viewBox="0 0 12 15" fill="none" stroke="#c8c8c8" stroke-width="1.300" stroke-linejoin="round"><path d="M1.500 1H10.500V13.500L6 9.500 1.500 13.500z"/></svg><svg style="left:768px;top:127px" width="15" height="12" viewBox="0 0 15 12" fill="none" stroke="#c8c8c8" stroke-width="1.300"><path d="M14.500 6H1.500M6.500 1L1.500 6l5 5"/></svg><svg style="left:797px;top:127px" width="15" height="12" viewBox="0 0 15 12" fill="none" stroke="#5a5a5a" stroke-width="1.300"><path d="M.500 6H13.500M8.500 1l5 5-5 5"/></svg><div class="t" style="left:826px;top:124px;font-size:13px;color:#a6a6a6;">pages</div><svg style="left:865px;top:128px" width="7" height="11" viewBox="0 0 7 11" fill="none" stroke="#a6a6a6" stroke-width="1.200"><path d="M1 1l4.500 4.500L1 10"/></svg><div class="t" style="left:877px;top:124px;font-size:13px;color:#a6a6a6;">index</div><svg style="left:912px;top:128px" width="7" height="11" viewBox="0 0 7 11" fill="none" stroke="#a6a6a6" stroke-width="1.200"><path d="M1 1l4.500 4.500L1 10"/></svg><div class="a" style="left:925px;top:127px;width:12.500px;height:12px;background:#f5c430;border-radius:1px"></div><div class="t" style="left:929.8px;top:129px;font-size:6.500px;font-weight:bold;color:#4a3c00;height:12px;line-height:12px;letter-spacing:-0.3px">JS</div><div class="t" style="left:945px;top:124px;font-size:13px;color:#c8c8c8;">index.js</div><svg style="left:992px;top:128px" width="7" height="11" viewBox="0 0 7 11" fill="none" stroke="#a6a6a6" stroke-width="1.200"><path d="M1 1l4.500 4.500L1 10"/></svg><svg style="left:1006px;top:126px" width="13" height="14" viewBox="0 0 13 14" fill="none" stroke="#b180d7" stroke-width="1.100" stroke-linejoin="round"><path d="M6.500 1L12 3.800V10.200L6.500 13 1 10.200V3.800z"/><path d="M1 3.800L6.500 6.800 12 3.800M6.500 6.800V13"/></svg><div class="t" style="left:1025px;top:124px;font-size:13px;color:#a6a6a6;letter-spacing:-0.1px">Onenet_GetInfo</div><svg style="left:1121px;top:128px" width="7" height="11" viewBox="0 0 7 11" fill="none" stroke="#a6a6a6" stroke-width="1.200"><path d="M1 1l4.500 4.500L1 10"/></svg><svg style="left:1134px;top:126px" width="13" height="14" viewBox="0 0 13 14" fill="none" stroke="#b180d7" stroke-width="1.100" stroke-linejoin="round"><path d="M6.500 1L12 3.800V10.200L6.500 13 1 10.200V3.800z"/><path d="M1 3.800L6.500 6.800 12 3.800M6.500 6.800V13"/></svg><div class="t" style="left:1154px;top:124px;font-size:13px;color:#a6a6a6;letter-spacing:-0.5px">success</div><svg style="left:1202px;top:128px" width="7" height="11" viewBox="0 0 7 11" fill="none" stroke="#a6a6a6" stroke-width="1.200"><path d="M1 1l4.500 4.500L1 10"/></svg><svg style="left:1214px;top:126px" width="14" height="14" viewBox="0 0 14 14" fill="none" stroke="#a6a6a6" stroke-width="1.200" stroke-linejoin="round"><path d="M8.500 1.500a3.500 3.500 0 0 0-2.300 4.800L1.500 11l1.500 1.500 4.700-4.700a3.500 3.500 0 0 0 4.800-2.300l-2.200 1.200L8.500 5.500l-.8-1.800z"/></svg><div class="t" style="left:1235px;top:124px;font-size:13px;color:#a6a6a6;">Temp</div><div class="a" style="left:700px;top:714px;width:819px;height:1px;background:#444;"></div><div class="a" style="left:700px;top:715px;width:819px;height:29px;background:#333333;"></div><div class="t" style="left:719.5px;top:720px;font-size:11px;color:#8f8f8f;">构建</div><div class="a" style="left:750px;top:721.500px;width:22px;height:17px;border-radius:9px;background:#4a4a4a"></div><div class="t" style="left:754.5px;top:720px;font-size:11px;color:#e8e8e8;">22</div><div class="t" style="left:792px;top:720px;font-size:11px;color:#ffffff;">调试器</div><div class="a" style="left:792px;top:743px;width:33px;height:1px;background:#e0e0e0;"></div><div class="a" style="left:833px;top:721.500px;width:33px;height:17px;border-radius:9px;background:#d8403a"></div><div class="t" style="left:838px;top:720px;font-size:11px;color:#fff;letter-spacing:-0.2px">14, 1</div><div class="t" style="left:885.5px;top:720px;font-size:11px;color:#8f8f8f;">问题</div><div class="t" style="left:927.5px;top:720px;font-size:11px;color:#8f8f8f;">输出</div><div class="t" style="left:969.5px;top:720px;font-size:11px;color:#8f8f8f;">终端</div><div class="t" style="left:1011.5px;top:720px;font-size:11px;color:#8f8f8f;">代码质量</div><div class="a" style="left:700px;top:744px;width:819px;height:26px;background:#292a2d;"></div><div class="a" style="left:700px;top:770px;width:819px;height:1px;background:#3d3d3d;"></div><svg style="left:709px;top:750px" width="16" height="16" viewBox="0 0 16 16" fill="none" stroke="#979797" stroke-width="1.200"><path d="M6 12.500H1.500V1.500H12.500V6" stroke-dasharray="none"/><path d="M7 7l2.800 7.500 1.400-3 3 3 1-1-3-3 3-1.400z" fill="#979797" stroke="none"/></svg><div class="a" style="left:734px;top:749px;width:1px;height:16px;background:#4a4a4a;"></div><div class="a" style="left:795px;top:744px;width:66px;height:26px;background:#000;"></div><div class="t" style="left:752.5px;top:747.5px;font-size:12px;color:#e8eaed;">Wxml</div><div class="t" style="left:806.5px;top:747.5px;font-size:12px;color:#fff;">Console</div><div class="t" style="left:872.5px;top:747.5px;font-size:12px;color:#e8eaed;">Sources</div><div class="t" style="left:937.5px;top:747.5px;font-size:12px;color:#e8eaed;">Network</div><div class="t" style="left:1006.5px;top:747.5px;font-size:12px;color:#e8eaed;">Performance</div><div class="t" style="left:1096.5px;top:747.5px;font-size:12px;color:#e8eaed;">Memory</div><div class="t" style="left:1164.5px;top:747.5px;font-size:12px;color:#e8eaed;">AppData</div><div class="t" style="left:1234.5px;top:747.5px;font-size:12px;color:#e8eaed;">Storage</div><div class="t" style="left:1298.5px;top:747.5px;font-size:12px;color:#e8eaed;">Security</div><div class="t" style="left:1373.5px;top:747.5px;font-size:12px;color:#e8eaed;">Sensor</div><div class="t" style="left:1432.5px;top:747.5px;font-size:12px;color:#e8eaed;">Mock</div><div class="t" style="left:1485.5px;top:747.5px;font-size:12px;color:#e8eaed;">Audits</div><div class="a" style="left:700px;top:771px;width:819px;height:26px;background:#292a2d;"></div><div class="a" style="left:700px;top:797px;width:819px;height:1px;background:#4a4a4a;"></div><svg style="left:708px;top:777px" width="15" height="14" viewBox="0 0 15 14" fill="none" stroke="#979797" stroke-width="1.200"><rect x="0.600" y="0.600" width="13.800" height="12.800"/><path d="M4.500 0.600V13.400"/><path d="M7.500 4l4 3-4 3z" fill="#979797" stroke="none"/></svg><svg style="left:738px;top:777px" width="14" height="14" viewBox="0 0 14 14" fill="none" stroke="#979797" stroke-width="1.400"><circle cx="7" cy="7" r="5.800"/><path d="M3 3l8 8"/></svg><div class="a" style="left:762px;top:776px;width:1px;height:16px;background:#4a4a4a;"></div><div class="t" style="left:772px;top:775px;font-size:12px;color:#e8eaed;">top</div><div class="a" style="left:893px;top:781px;border:3.500px solid transparent;border-top:6px solid #979797;border-bottom:0"></div><div class="a" style="left:909px;top:776px;width:1px;height:16px;background:#4a4a4a;"></div><svg style="left:920px;top:778px" width="16" height="11" viewBox="0 0 16 11"><path d="M0 5.500C1.800 2.200 4.600 0.300 8 0.300S14.200 2.200 16 5.500C14.200 8.800 11.400 10.700 8 10.700S1.800 8.800 0 5.500z" fill="#979797"/><circle cx="8" cy="5.500" r="3" fill="#292a2d"/><circle cx="8" cy="5.500" r="1.600" fill="#979797"/></svg><div class="a" style="left:946px;top:776px;width:1px;height:16px;background:#4a4a4a;"></div><div class="a" style="left:953px;top:774.500px;width:262.500px;height:20px;border:1px solid #555;background:#242424"></div><div class="t" style="left:958px;top:775px;font-size:12px;color:#d0d0d0;">Filter</div><div class="t" style="left:1224px;top:774px;font-size:12px;color:#e8eaed;">Default levels</div><div class="a" style="left:1299px;top:781px;border:3.500px solid transparent;border-top:6px solid #979797;border-bottom:0"></div><div class="a" style="left:700px;top:798px;width:819px;height:206px;background:#242424;"></div><div class="a mono" style="left:700px;top:798px;width:818px;height:206px;overflow:hidden;font-size:11px;color:#e8e8e8"><div class="a" style="left:13px;top:0px;width:1px;height:30px;background:#555"></div><div class="a" style="left:13px;top:29px;width:6px;height:1px;background:#555"></div><div class="a" style="left:38px;top:0px;width:1px;height:10px;background:#4a4a4a"></div><div class="a" style="left:611px;top:0px;width:1px;height:10px;background:#4a4a4a"></div><div class="a" style="left:38px;top:10px;width:781px;height:1px;background:#4a4a4a"></div><div class="t mono" style="left:41px;top:-9px;font-size:11px;color:#e8e8e8;">0</div><div class="t mono" style="left:616px;top:-9px;font-size:11px;color:#f28b54;">"https://tcb-api.tencentcloudapi.com"</div><div class="a" style="left:40px;top:15.5px;border:3.500px solid transparent;border-left:5.500px solid #8e8e8e;border-right:0"></div><div class="t mono" style="left:49px;top:10px;font-size:11px;color:#e8e8e8;">Array(1)</div><div class="a" style="left:0px;top:29px;width:819px;height:1px;background:#3a3a3a"></div><div class="a" style="left:11px;top:37px;border:3.500px solid transparent;border-top:6px solid #9a9a9a;border-bottom:0"></div><div class="t mono" style="left:24.5px;top:31px;font-size:11px;color:#f0f0f0;font-weight:bold">Thu Oct 02 2025 16:05:09 GMT+0800 <span style="font-size:12px;letter-spacing:0.85px">(中国标准时间)</span> request <span style="font-size:12px;letter-spacing:0.85px">合法域名校验出错</span></div><div class="a" style="left:0px;top:49px;width:819px;height:1px;background:#3a3a3a"></div><div class="a" style="left:13px;top:50px;width:1px;height:118px;background:#555"></div><div class="t mono" style="left:37.5px;top:51.5px;font-size:11px;color:#f0f0f0;"><span style="font-size:12px">如若已在管理后台更新域名配置，请刷新项目配置后重新编译项目，操作路径：“详情-域名信息”</span></div><div class="a" style="left:0;top:69px;width:819px;height:35px;background:#290000;border-top:1px solid #5c0000;border-bottom:1px solid #5c0000"></div><svg style="left:21.5px;top:74.5px" width="10" height="10" viewBox="0 0 10 10"><circle cx="5" cy="5" r="5" fill="#e8504a"/><path d="M3.200 3.200l3.600 3.600M6.800 3.200L3.200 6.800" stroke="#ffe8e6" stroke-width="1.300"/></svg><div class="a" style="left:40px;top:76.5px;border:3.500px solid transparent;border-left:5.500px solid #b0b0b0;border-right:0"></div><div class="t mono" style="left:54.5px;top:71px;font-size:11px;color:#ff6b68;"><span style="color:#e8e8e8;text-decoration:underline">https://iot-api.heclouds.com</span> <span style="font-size:12px">不在以下</span> request <span style="font-size:12px">合法域名列表中，请参考文档：</span><span style="color:#e8e8e8;text-decoration:underline">https://developers.weixin.qq.com/miniprogram/dev/framework/ability/network.html</span></div><div class="t mono" style="left:38.5px;top:85px;font-size:11px;color:#ff6b68;">(env: Windows,mp,1.06.2504010; lib: 3.9.2)</div><div class="a" style="left:38px;top:107px;width:800px;height:44px;border:1px solid #4a4a4a;background:#242424"></div><div class="a" style="left:39px;top:108px;width:800px;height:20px;background:#2d2d2d"></div><div class="a" style="left:38px;top:128px;width:781px;height:1px;background:#4a4a4a"></div><div class="a" style="left:611px;top:107px;width:1px;height:44px;background:#4a4a4a"></div><div class="t mono" style="left:42.5px;top:109px;font-size:11px;color:#e8e8e8;">(index)</div><div class="t mono" style="left:616px;top:109px;font-size:11px;color:#e8e8e8;">0</div><div class="t mono" style="left:41px;top:129.5px;font-size:11px;color:#e8e8e8;">0</div><div class="t mono" style="left:616px;top:129.5px;font-size:11px;color:#f28b54;">"https://tcb-api.tencentcloudapi.com"</div><div class="a" style="left:40px;top:155.5px;border:3.500px solid transparent;border-left:5.500px solid #8e8e8e;border-right:0"></div><div class="t mono" style="left:49px;top:150px;font-size:11px;color:#e8e8e8;">Array(1)</div><div class="a" style="left:0px;top:168px;width:819px;height:1px;background:#3a3a3a"></div><svg style="left:9px;top:174px" width="6" height="9" viewBox="0 0 6 9" fill="none" stroke="#3d7fe8" stroke-width="1.500"><path d="M1 1l3.500 3.500L1 8"/></svg></div><div class="a" style="left:700px;top:996px;width:819px;height:8px;background:#242424;"></div><div class="a" style="left:1518px;top:92px;width:1px;height:940px;background:#474747;"></div><div class="a" style="left:1519px;top:92px;width:401px;height:940px;background:#2e2e2e;"></div><div class="t" style="left:1569px;top:113.600px;transform:translateX(-50%);font-size:13px;color:#d0d0d0;font-weight:500">基本信息</div><div class="t" style="left:1669px;top:113.600px;transform:translateX(-50%);font-size:13px;color:#d0d0d0;font-weight:500">性能质量</div><div class="t" style="left:1769px;top:113.600px;transform:translateX(-50%);font-size:13px;color:#ffffff;font-weight:bold">本地设置</div><div class="t" style="left:1869px;top:113.600px;transform:translateX(-50%);font-size:13px;color:#d0d0d0;font-weight:500">项目配置</div><div class="a" style="left:1729px;top:146px;width:80px;height:1px;background:#8a8a8a;"></div><div class="t" style="left:1551px;top:182.5px;font-size:13px;color:#a0a0a0;">调试基础库</div><svg style="left:1619px;top:186px" width="14" height="14" viewBox="0 0 14 14" fill="none" stroke="#9a9a9a" stroke-width="1"><circle cx="7" cy="7" r="6.300"/></svg><div class="t" style="left:1623.5px;top:183px;font-size:10px;color:#9a9a9a;">?</div><div class="a" style="left:1690px;top:181px;width:120px;height:22px;background:#444444;border-radius:3px"></div><div class="t" style="left:1700px;top:182.5px;font-size:13px;color:#ffffff;font-weight:bold;letter-spacing:-0.3px">3.9.2</div><div class="t" style="left:1746px;top:182.5px;font-size:12px;color:#a8a8a8;">0.01%</div><div class="a" style="left:1790px;top:190px;border:3px solid transparent;border-top:4px solid #e8e8e8;border-bottom:0"></div><div class="a" style="left:1815px;top:181px;width:72px;height:22px;background:#444444;border-radius:3px"></div><div class="t" style="left:1815px;width:72px;text-align:center;top:182.500px;font-size:12px;color:#fff;font-weight:bold">推送</div><div class="t" style="left:1551px;top:217px;font-size:11px;color:#a8a8a8;font-weight:500">该基础库支持微信客户端</div><div class="t" style="left:1551px;top:238px;font-size:11px;color:#a0a0a0;">iOS</div><div class="t" style="left:1687px;width:200px;text-align:right;top:238px;font-size:11px;color:#a0a0a0">8.0.61 及以上版本</div><div class="a" style="left:1551px;top:258.5px;width:336px;height:1px;background:#3a3a3a;"></div><div class="t" style="left:1551px;top:263px;font-size:11px;color:#a0a0a0;">Android</div><div class="t" style="left:1687px;width:200px;text-align:right;top:263px;font-size:11px;color:#a0a0a0">8.0.61 及以上版本</div><div class="a" style="left:1551px;top:283.5px;width:336px;height:1px;background:#3a3a3a;"></div><div class="t" style="left:1551px;top:288px;font-size:11px;color:#a0a0a0;">MacOS</div><div class="t" style="left:1687px;width:200px;text-align:right;top:288px;font-size:11px;color:#a0a0a0">暂不支持</div><div class="a" style="left:1551px;top:308.5px;width:336px;height:1px;background:#3a3a3a;"></div><div class="t" style="left:1551px;top:313px;font-size:11px;color:#a0a0a0;">Windows</div><div class="t" style="left:1687px;width:200px;text-align:right;top:313px;font-size:11px;color:#a0a0a0">暂不支持</div><div class="a" style="left:1551px;top:333.5px;width:336px;height:1px;background:#3a3a3a;"></div><div class="a" style="left:1551px;top:369px;width:14px;height:14px;border-radius:1.500px;background:#434343;border:1px solid #686868"></div><div class="t" style="left:1575px;top:365.5px;font-size:13px;color:#dedede;height:auto;word-spacing:-0.4px">启用条件编译</div><div class="a" style="left:1551px;top:399px;width:14px;height:14px;border-radius:2px;background:#0bc26c"></div><svg style="left:1551px;top:399px" width="14" height="14" viewBox="0 0 14 14" fill="none" stroke="#fff" stroke-width="1.500"><path d="M3 7.200L6 10.200L11 3.800"/></svg><div class="t" style="left:1575px;top:395.5px;font-size:13px;color:#dedede;height:auto;word-spacing:-0.4px">将 <span style="letter-spacing:-1.1px">JS</span> 编译成 <span style="letter-spacing:-1.1px">ES5</span></div><div class="a" style="left:1551px;top:429px;width:14px;height:14px;border-radius:1.500px;background:#434343;border:1px solid #686868"></div><div class="t" style="left:1575px;top:425.5px;font-size:13px;color:#dedede;height:auto;word-spacing:-0.4px">使用 <span style="letter-spacing:-1.1px">SWC</span> 编译脚本文件</div><div class="a" style="left:1551px;top:459px;width:14px;height:14px;border-radius:1.500px;background:#434343;border:1px solid #686868"></div><div class="t" style="left:1575px;top:455.5px;font-size:13px;color:#dedede;height:auto;word-spacing:-0.4px">编译 worklet 代码</div><div class="a" style="left:1551px;top:489px;width:14px;height:14px;border-radius:2px;background:#0bc26c"></div><svg style="left:1551px;top:489px" width="14" height="14" viewBox="0 0 14 14" fill="none" stroke="#fff" stroke-width="1.500"><path d="M3 7.200L6 10.200L11 3.800"/></svg><div class="t" style="left:1575px;top:485.5px;font-size:13px;color:#dedede;height:auto;word-spacing:-0.4px">上传代码时样式自动补全</div><div class="a" style="left:1551px;top:519px;width:14px;height:14px;border-radius:2px;background:#0bc26c"></div><svg style="left:1551px;top:519px" width="14" height="14" viewBox="0 0 14 14" fill="none" stroke="#fff" stroke-width="1.500"><path d="M3 7.200L6 10.200L11 3.800"/></svg><div class="t" style="left:1575px;top:515.5px;font-size:13px;color:#dedede;height:auto;word-spacing:-0.4px">上传代码时自动压缩样式文件</div><div class="a" style="left:1551px;top:549px;width:14px;height:14px;border-radius:2px;background:#0bc26c"></div><svg style="left:1551px;top:549px" width="14" height="14" viewBox="0 0 14 14" fill="none" stroke="#fff" stroke-width="1.500"><path d="M3 7.200L6 10.200L11 3.800"/></svg><div class="t" style="left:1575px;top:545.5px;font-size:13px;color:#dedede;height:auto;word-spacing:-0.4px">上传代码时自动压缩脚本文件</div><div class="a" style="left:1551px;top:579px;width:14px;height:14px;border-radius:2px;background:#0bc26c"></div><svg style="left:1551px;top:579px" width="14" height="14" viewBox="0 0 14 14" fill="none" stroke="#fff" stroke-width="1.500"><path d="M3 7.200L6 10.200L11 3.800"/></svg><div class="t" style="left:1575px;top:575.5px;font-size:13px;color:#dedede;height:auto;word-spacing:-0.4px">上传代码时自动压缩wxml文件</div><div class="a" style="left:1551px;top:609px;width:14px;height:14px;border-radius:2px;background:#0bc26c"></div><svg style="left:1551px;top:609px" width="14" height="14" viewBox="0 0 14 14" fill="none" stroke="#fff" stroke-width="1.500"><path d="M3 7.200L6 10.200L11 3.800"/></svg><div class="t" style="left:1575px;top:605.5px;font-size:13px;color:#dedede;height:auto;word-spacing:-0.4px">上传时过滤无依赖文件</div><div class="a" style="left:1551px;top:639px;width:14px;height:14px;border-radius:1.500px;background:#434343;border:1px solid #686868"></div><div class="t" style="left:1575px;top:635.5px;font-size:13px;color:#dedede;height:auto;word-spacing:-0.4px">上传时进行代码保护</div><div class="a" style="left:1551px;top:669px;width:14px;height:14px;border-radius:1.500px;background:#434343;border:1px solid #686868"></div><div class="t" style="left:1575px;top:665.5px;font-size:13px;color:#dedede;height:auto;word-spacing:-0.4px">自动运行体验评分</div><div class="a" style="left:1551px;top:699px;width:14px;height:14px;border-radius:2px;background:#0bc26c"></div><svg style="left:1551px;top:699px" width="14" height="14" viewBox="0 0 14 14" fill="none" stroke="#fff" stroke-width="1.500"><path d="M3 7.200L6 10.200L11 3.800"/></svg><div class="t" style="left:1575px;top:695.5px;font-size:13px;color:#dedede;height:auto;word-spacing:-0.4px">不校验合法域名、web-view（业务域名）、<span style="letter-spacing:-1.1px">TLS</span> 版<br>本以及 <span style="letter-spacing:-1.1px">HTTPS</span> 证书</div><div class="a" style="left:1551px;top:749px;width:14px;height:14px;border-radius:1.500px;background:#434343;border:1px solid #686868"></div><div class="t" style="left:1575px;top:745.5px;font-size:13px;color:#dedede;height:auto;word-spacing:-0.4px">预览及真机调试时主包、分包体积上限调整为<span style="letter-spacing:-1.1px">4M</span></div><div class="a" style="left:1551px;top:779px;width:14px;height:14px;border-radius:1.500px;background:#434343;border:1px solid #686868"></div><div class="t" style="left:1575px;top:775.5px;font-size:13px;color:#dedede;height:auto;word-spacing:-0.4px">启用数据预拉取</div><div class="a" style="left:1551px;top:809px;width:14px;height:14px;border-radius:2px;background:#0bc26c"></div><svg style="left:1551px;top:809px" width="14" height="14" viewBox="0 0 14 14" fill="none" stroke="#fff" stroke-width="1.500"><path d="M3 7.200L6 10.200L11 3.800"/></svg><div class="t" style="left:1575px;top:805.5px;font-size:13px;color:#dedede;height:auto;word-spacing:-0.4px">启用代码自动热重载</div><div class="a" style="left:1551px;top:839px;width:14px;height:14px;border-radius:1.500px;background:#434343;border:1px solid #686868"></div><div class="t" style="left:1575px;top:835.5px;font-size:13px;color:#dedede;height:auto;word-spacing:-0.4px">开启 Skyline 渲染调试</div><div class="a" style="left:1551px;top:869px;width:14px;height:14px;border-radius:1.500px;background:#434343;border:1px solid #686868"></div><div class="t" style="left:1575px;top:865.5px;font-size:13px;color:#dedede;height:auto;word-spacing:-0.4px">懒注入占位组件调试</div><div class="a" style="left:1551px;top:899px;width:14px;height:14px;border-radius:2px;background:#0bc26c"></div><svg style="left:1551px;top:899px" width="14" height="14" viewBox="0 0 14 14" fill="none" stroke="#fff" stroke-width="1.500"><path d="M3 7.200L6 10.200L11 3.800"/></svg><div class="t" style="left:1575px;top:895.5px;font-size:13px;color:#dedede;height:auto;word-spacing:-0.4px">启用多核心编译</div><div class="a" style="left:1551px;top:929px;width:14px;height:14px;border-radius:1.500px;background:#434343;border:1px solid #686868"></div><div class="t" style="left:1575px;top:925.5px;font-size:13px;color:#dedede;height:auto;word-spacing:-0.4px">启用自定义处理命令</div><div class="a" style="left:1677.500px;top:37px;width:208.500px;height:163px;border:4.500px solid #f8516a;border-radius:5px"></div><div class="a" style="left:1527px;top:685px;width:359px;height:53px;border:4px solid #f8516a;border-radius:5px"></div><div class="a" style="left:1919px;top:92px;width:1px;height:940px;background:#222222;"></div></body></html>
